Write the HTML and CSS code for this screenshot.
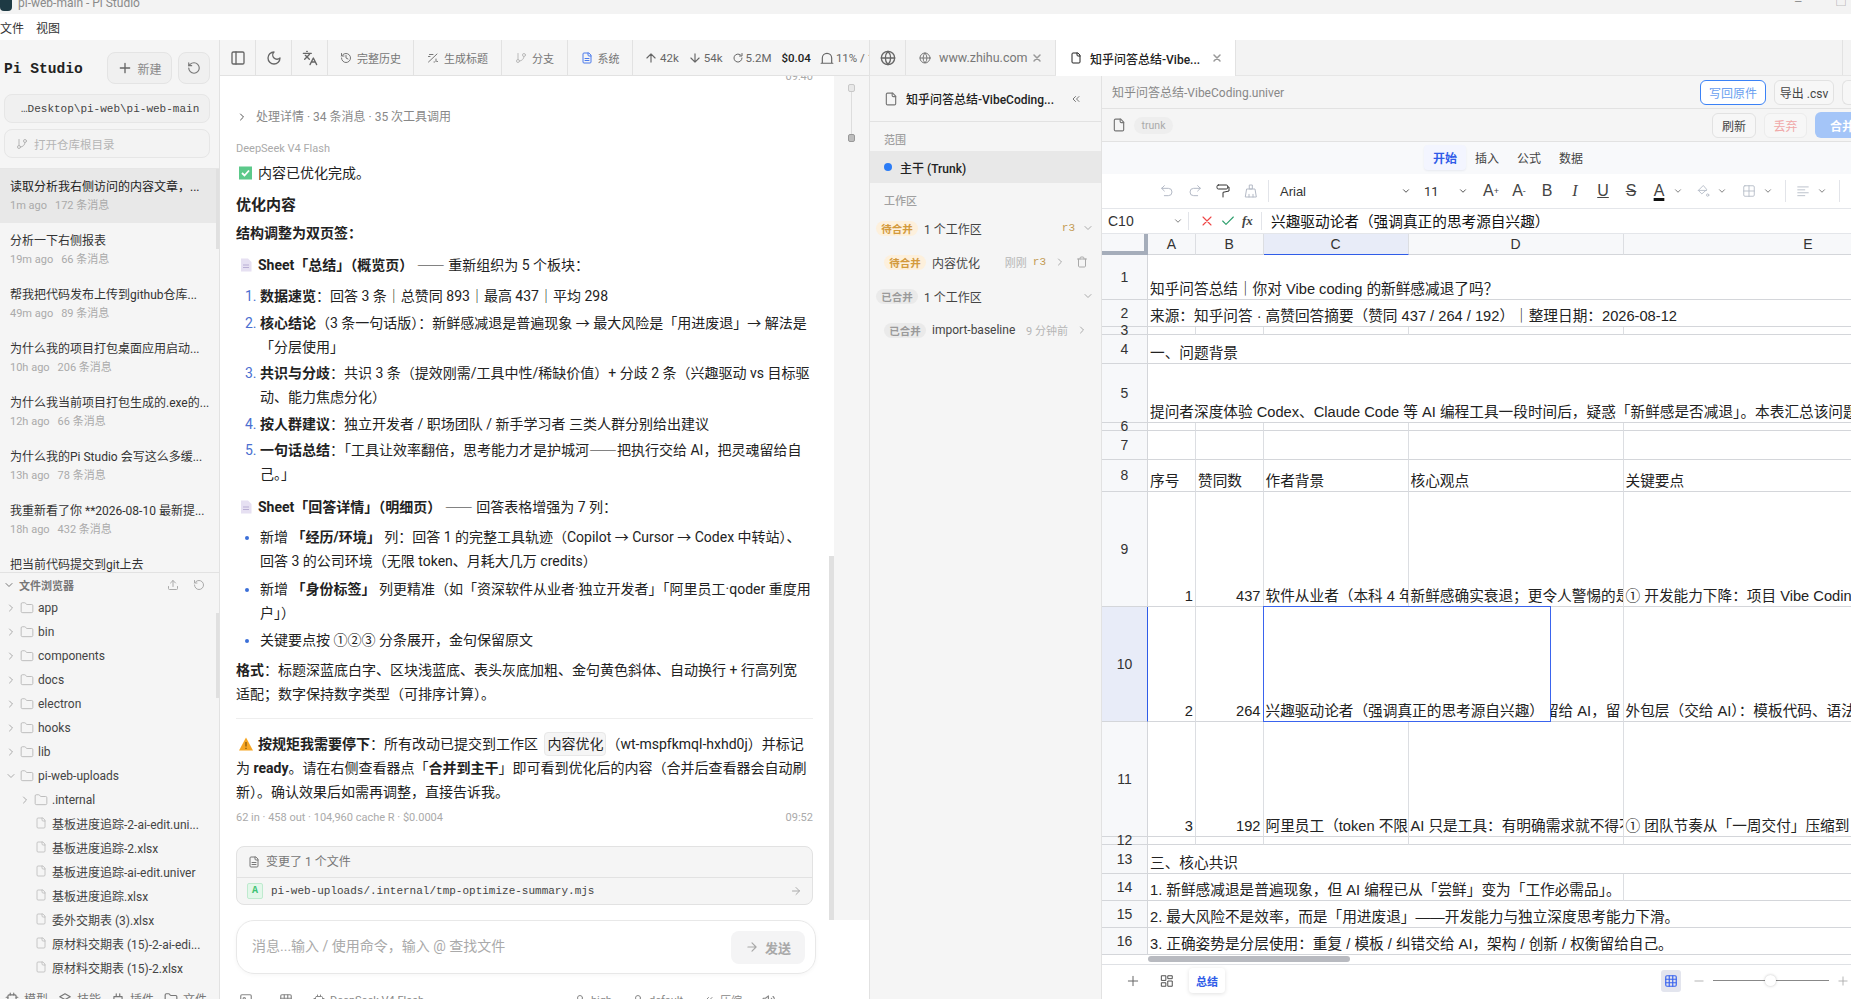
FILE: index.html
```html
<!DOCTYPE html>
<html lang="zh-CN">
<head>
    <title>pi-web-main - Pi Studio</title>
    <link rel="stylesheet" href="styles.css">
</head>
<body>
    <svg class="sprite">
        <symbol id="i-panel" viewBox="0 0 24 24"><rect x="3" y="3" width="18" height="18" rx="2"/><path d="M9 3v18"/></symbol>
        <symbol id="i-moon" viewBox="0 0 24 24"><path d="M12 3a6 6 0 0 0 9 9 9 9 0 1 1-9-9Z"/></symbol>
        <symbol id="i-lang" viewBox="0 0 24 24"><path d="m5 8 6 6M4 14l6-6 2-3M2 5h12M7 2h1M22 22l-5-10-5 10M14 18h6"/></symbol>
        <symbol id="i-history" viewBox="0 0 24 24"><path d="M3 12a9 9 0 1 0 9-9 9.75 9.75 0 0 0-6.74 2.74L3 8"/><path d="M3 3v5h5M12 7v5l4 2"/></symbol>
        <symbol id="i-rotate" viewBox="0 0 24 24"><path d="M3 12a9 9 0 1 0 9-9 9.75 9.75 0 0 0-6.74 2.74L3 8"/><path d="M3 3v5h5"/></symbol>
        <symbol id="i-wand" viewBox="0 0 24 24"><path d="M3 20 20 4M5 5h7M3 9h3M18 14v5M21 19h-1M14 20h1"/></symbol>
        <symbol id="i-branch" viewBox="0 0 24 24"><path d="M6 3v12"/><circle cx="6" cy="18" r="3"/><circle cx="18" cy="6" r="3"/><path d="M18 9a9 9 0 0 1-9 9"/></symbol>
        <symbol id="i-file-text" viewBox="0 0 24 24"><path d="M15 2H6a2 2 0 0 0-2 2v16a2 2 0 0 0 2 2h12a2 2 0 0 0 2-2V7Z"/><path d="M14 2v4a2 2 0 0 0 2 2h4M16 13H8M16 17H8"/></symbol>
        <symbol id="i-file" viewBox="0 0 24 24"><path d="M15 2H6a2 2 0 0 0-2 2v16a2 2 0 0 0 2 2h12a2 2 0 0 0 2-2V7Z"/><path d="M14 2v4a2 2 0 0 0 2 2h4"/></symbol>
        <symbol id="i-folder" viewBox="0 0 24 24"><path d="M20 20a2 2 0 0 0 2-2V8a2 2 0 0 0-2-2h-7.9a2 2 0 0 1-1.69-.9L9.6 3.9A2 2 0 0 0 7.93 3H4a2 2 0 0 0-2 2v13a2 2 0 0 0 2 2Z"/></symbol>
        <symbol id="i-right" viewBox="0 0 24 24"><path d="m9 18 6-6-6-6"/></symbol>
        <symbol id="i-down" viewBox="0 0 24 24"><path d="m6 9 6 6 6-6"/></symbol>
        <symbol id="i-arrow-up" viewBox="0 0 24 24"><path d="m5 12 7-7 7 7M12 19V5"/></symbol>
        <symbol id="i-arrow-down" viewBox="0 0 24 24"><path d="M12 5v14M19 12l-7 7-7-7"/></symbol>
        <symbol id="i-arrow-right" viewBox="0 0 24 24"><path d="M5 12h14M12 5l7 7-7 7"/></symbol>
        <symbol id="i-refresh" viewBox="0 0 24 24"><path d="M20 12a8 8 0 1 1-3-6.2"/><path d="M20 3v5h-5"/></symbol>
        <symbol id="i-ctx" viewBox="0 0 24 24"><path d="M4 21v-9a8 8 0 0 1 16 0v9ZM2 21h20"/></symbol>
        <symbol id="i-globe" viewBox="0 0 24 24"><circle cx="12" cy="12" r="10"/><path d="M12 2a14.5 14.5 0 0 0 0 20 14.5 14.5 0 0 0 0-20M2 12h20"/></symbol>
        <symbol id="i-x" viewBox="0 0 24 24"><path d="M18 6 6 18M6 6l12 12"/></symbol>
        <symbol id="i-plus" viewBox="0 0 24 24"><path d="M5 12h14M12 5v14"/></symbol>
        <symbol id="i-minus" viewBox="0 0 24 24"><path d="M5 12h14"/></symbol>
        <symbol id="i-trash" viewBox="0 0 24 24"><path d="M3 6h18M19 6v14c0 1-1 2-2 2H7c-1 0-2-1-2-2V6M8 6V4c0-1 1-2 2-2h4c1 0 2 1 2 2v2"/></symbol>
        <symbol id="i-upload" viewBox="0 0 24 24"><path d="M21 15v4a2 2 0 0 1-2 2H5a2 2 0 0 1-2-2v-4M17 8l-5-5-5 5M12 3v12"/></symbol>
        <symbol id="i-chevrons" viewBox="0 0 24 24"><path d="m11 17-5-5 5-5M18 17l-5-5 5-5"/></symbol>
        <symbol id="i-check" viewBox="0 0 24 24"><path d="M20 6 9 17l-5-5"/></symbol>
        <symbol id="i-cpu" viewBox="0 0 24 24"><rect x="5" y="5" width="14" height="14" rx="2"/><path d="M9 2v3M15 2v3M9 19v3M15 19v3M2 9h3M2 15h3M19 9h3M19 15h3"/></symbol>
        <symbol id="i-grid" viewBox="0 0 24 24"><rect x="3" y="3" width="18" height="18" rx="2"/><path d="M3 12h18M12 3v18"/></symbol>
        <symbol id="i-grid-fine" viewBox="0 0 24 24"><rect x="3" y="3" width="18" height="18" rx="2"/><path d="M3 9h18M3 15h18M9 3v18M15 3v18"/></symbol>
        <symbol id="i-undo" viewBox="0 0 24 24"><path d="M8 4 4 8l4 4M4 8h10a5.5 5.5 0 0 1 0 11H8"/></symbol>
        <symbol id="i-redo" viewBox="0 0 24 24"><path d="m16 4 4 4-4 4M20 8H10a5.5 5.5 0 0 0 0 11h6"/></symbol>
        <symbol id="i-roller" viewBox="0 0 24 24"><rect x="3" y="3" width="16" height="6" rx="2"/><path d="M19 6h2v6l-9 2v7"/></symbol>
        <symbol id="i-brush" viewBox="0 0 24 24"><path d="M10 3h4v6h-4ZM6 9h12l2 12H4Z"/><path d="M9 21v-4M15 21v-4"/></symbol>
        <symbol id="i-fill" viewBox="0 0 24 24"><path d="M12 3 4 11l6 6 8-7ZM4 11h14"/><circle cx="20" cy="19" r="2"/></symbol>
        <symbol id="i-align" viewBox="0 0 24 24"><path d="M3 5h18M3 10h12M3 15h18M3 20h12"/></symbol>
        <symbol id="i-sheets" viewBox="0 0 24 24"><path d="M3 3h7v8H3ZM3 15h7v6H3ZM14 3h7v5h-7ZM14 12h7v9h-7Z"/></symbol>
        <symbol id="i-puzzle" viewBox="0 0 24 24"><path d="M9 3v5M15 3v5M5 8h14v4a7 7 0 0 1-14 0ZM12 19v3"/></symbol>
        <symbol id="i-box" viewBox="0 0 24 24"><path d="m12 3 9 5-9 5-9-5ZM3 13l9 5 9-5"/></symbol>
        <symbol id="i-image" viewBox="0 0 24 24"><rect x="3" y="3" width="18" height="18" rx="2"/><circle cx="9" cy="10" r="2"/><path d="m21 17-4-4-10 8"/></symbol>
        <symbol id="i-brain" viewBox="0 0 24 24"><circle cx="12" cy="8" r="5"/><path d="M9 13v8h6v-8"/></symbol>
        <symbol id="i-volume" viewBox="0 0 24 24"><path d="M11 5 6 9H2v6h4l5 4ZM16 9a5 5 0 0 1 0 6M19 6a9 9 0 0 1 0 12"/></symbol>
    </svg>

    <div class="titlebar">
        <span class="app-logo"></span>
        <span class="title-text">pi-web-main - Pi Studio</span>
        <span class="win-btns"><span>—</span><span>▢</span></span>
    </div>
    <div class="menubar"><span>文件</span><span>视图</span></div>

    <div class="main">
        <aside class="sidebar">
            <div class="side-top">
                <div class="brand-row">
                    <span class="brand">Pi Studio</span>
                    <button class="new-btn"><svg class="ic ic-16"><use href="#i-plus"/></svg>新建</button>
                    <button class="square-btn"><svg class="ic ic-14"><use href="#i-rotate"/></svg></button>
                </div>
                <div class="path-box">…Desktop\pi-web\pi-web-main</div>
                <div class="repo-box"><svg class="ic ic-12"><use href="#i-branch"/></svg>打开仓库根目录</div>
            </div>

            <div class="session-list">
                <div class="session active"><div class="s-title">读取分析我右侧访问的内容文章，...</div><div class="s-sub"><span>1m ago</span><span>172 条消息</span></div></div>
                <div class="session"><div class="s-title">分析一下右侧报表</div><div class="s-sub"><span>19m ago</span><span>66 条消息</span></div></div>
                <div class="session"><div class="s-title">帮我把代码发布上传到github仓库...</div><div class="s-sub"><span>49m ago</span><span>89 条消息</span></div></div>
                <div class="session"><div class="s-title">为什么我的项目打包桌面应用启动...</div><div class="s-sub"><span>10h ago</span><span>206 条消息</span></div></div>
                <div class="session"><div class="s-title">为什么我当前项目打包生成的.exe的...</div><div class="s-sub"><span>12h ago</span><span>66 条消息</span></div></div>
                <div class="session"><div class="s-title">为什么我的Pi Studio 会写这么多缓...</div><div class="s-sub"><span>13h ago</span><span>78 条消息</span></div></div>
                <div class="session"><div class="s-title">我重新看了你 **2026-08-10 最新提...</div><div class="s-sub"><span>18h ago</span><span>432 条消息</span></div></div>
                <div class="session"><div class="s-title">把当前代码提交到git上去</div></div>
                <span class="thumb session-thumb"></span>
            </div>

            <div class="file-browser">
                <div class="fb-head">
                    <svg class="ic ic-12"><use href="#i-down"/></svg>
                    <span class="fb-title">文件浏览器</span>
                    <svg class="ic ic-12 fb-upload"><use href="#i-upload"/></svg>
                    <svg class="ic ic-12 fb-refresh"><use href="#i-rotate"/></svg>
                </div>
                <div class="f-row"><svg class="ic ic-12 chev"><use href="#i-right"/></svg><svg class="ic ic-14 fold"><use href="#i-folder"/></svg>app</div>
                <div class="f-row"><svg class="ic ic-12 chev"><use href="#i-right"/></svg><svg class="ic ic-14 fold"><use href="#i-folder"/></svg>bin</div>
                <div class="f-row"><svg class="ic ic-12 chev"><use href="#i-right"/></svg><svg class="ic ic-14 fold"><use href="#i-folder"/></svg>components</div>
                <div class="f-row"><svg class="ic ic-12 chev"><use href="#i-right"/></svg><svg class="ic ic-14 fold"><use href="#i-folder"/></svg>docs</div>
                <div class="f-row"><svg class="ic ic-12 chev"><use href="#i-right"/></svg><svg class="ic ic-14 fold"><use href="#i-folder"/></svg>electron</div>
                <div class="f-row"><svg class="ic ic-12 chev"><use href="#i-right"/></svg><svg class="ic ic-14 fold"><use href="#i-folder"/></svg>hooks</div>
                <div class="f-row"><svg class="ic ic-12 chev"><use href="#i-right"/></svg><svg class="ic ic-14 fold"><use href="#i-folder"/></svg>lib</div>
                <div class="f-row"><svg class="ic ic-12 chev"><use href="#i-down"/></svg><svg class="ic ic-14 fold"><use href="#i-folder"/></svg>pi-web-uploads</div>
                <div class="f-row nested"><svg class="ic ic-12 chev"><use href="#i-right"/></svg><svg class="ic ic-14 fold"><use href="#i-folder"/></svg>.internal</div>
                <div class="f-row leaf"><svg class="ic ic-12 doc"><use href="#i-file"/></svg>基板进度追踪-2-ai-edit.uni...</div>
                <div class="f-row leaf"><svg class="ic ic-12 doc"><use href="#i-file"/></svg>基板进度追踪-2.xlsx</div>
                <div class="f-row leaf"><svg class="ic ic-12 doc"><use href="#i-file"/></svg>基板进度追踪-ai-edit.univer</div>
                <div class="f-row leaf"><svg class="ic ic-12 doc"><use href="#i-file"/></svg>基板进度追踪.xlsx</div>
                <div class="f-row leaf"><svg class="ic ic-12 doc"><use href="#i-file"/></svg>委外交期表 (3).xlsx</div>
                <div class="f-row leaf"><svg class="ic ic-12 doc"><use href="#i-file"/></svg>原材料交期表 (15)-2-ai-edi...</div>
                <div class="f-row leaf"><svg class="ic ic-12 doc"><use href="#i-file"/></svg>原材料交期表 (15)-2.xlsx</div>
                <span class="thumb files-thumb"></span>
            </div>

            <div class="side-foot">
                <span><svg class="ic ic-14"><use href="#i-cpu"/></svg>模型</span>
                <span><svg class="ic ic-14"><use href="#i-box"/></svg>技能</span>
                <span><svg class="ic ic-14"><use href="#i-puzzle"/></svg>插件</span>
                <span><svg class="ic ic-14"><use href="#i-folder"/></svg>文件</span>
            </div>
        </aside>

        <section class="chat">
            <div class="chat-toolbar">
                <span class="tb-btn icon-only"><svg class="ic ic-16"><use href="#i-panel"/></svg></span>
                <span class="tb-btn icon-only"><svg class="ic ic-16"><use href="#i-moon"/></svg></span>
                <span class="tb-btn icon-only"><svg class="ic ic-16"><use href="#i-lang"/></svg></span>
                <span class="tb-btn w-86"><svg class="ic ic-12"><use href="#i-history"/></svg>完整历史</span>
                <span class="tb-btn w-88"><svg class="ic ic-12"><use href="#i-wand"/></svg>生成标题</span>
                <span class="tb-btn w-66 muted"><svg class="ic ic-12"><use href="#i-branch"/></svg>分支</span>
                <span class="tb-btn w-65"><svg class="ic ic-12 blue"><use href="#i-file-text"/></svg>系统</span>
                <span class="stats">
                    <span class="stat"><svg class="ic ic-14"><use href="#i-arrow-up"/></svg>42k</span>
                    <span class="stat"><svg class="ic ic-14"><use href="#i-arrow-down"/></svg>54k</span>
                    <span class="stat"><svg class="ic ic-12"><use href="#i-refresh"/></svg>5.2M</span>
                    <span class="stat cost">$0.04</span>
                    <span class="stat"><svg class="ic ic-14"><use href="#i-ctx"/></svg>11% / 1M</span>
                </span>
            </div>

            <div class="chat-body">
                <div class="messages">
                    <div class="time-top">09:40</div>
                    <div class="detail-row"><svg class="ic ic-12"><use href="#i-right"/></svg>处理详情 · 34 条消息 · 35 次工具调用</div>
                    <div class="model-name">DeepSeek V4 Flash</div>

                    <p class="line first"><svg class="emoji" viewBox="0 0 16 16"><rect x="1" y="1.5" width="13" height="13" fill="#5cc98a"/><path d="m4 8 2.5 2.5L11 5.5" fill="none" stroke="#fff" stroke-width="1.8"/></svg>内容已优化完成。</p>
                    <h3 class="msg-h">优化内容</h3>
                    <p class="line strong-line"><b>结构调整为双页签：</b></p>
                    <p class="line sheet-line"><svg class="emoji" viewBox="0 0 16 16"><path d="M3 1.5h7l3.5 3.5v9.5H3Z" fill="#e6e0f2"/><path d="M5 8h6M5 10.5h6" stroke="#b9aed4"/></svg><b>Sheet「总结」（概览页）</b> <span class="cjk">——</span> 重新组织为 5 个板块：</p>

                    <ol class="msg-ol">
                        <li><b>数据速览</b>：回答 3 条｜总赞同 893｜最高 437｜平均 298</li>
                        <li><b>核心结论</b>（3 条一句话版）：新鲜感减退是普遍现象 → 最大风险是「用进废退」→ 解法是<br>「分层使用」</li>
                        <li><b>共识与分歧</b>：共识 3 条（提效刚需/工具中性/稀缺价值）+ 分歧 2 条（兴趣驱动 vs 目标驱<br>动、能力焦虑分化）</li>
                        <li><b>按人群建议</b>：独立开发者 / 职场团队 / 新手学习者 三类人群分别给出建议</li>
                        <li><b>一句话总结</b>：「工具让效率翻倍，思考能力才是护城河<span class="cjk">——</span>把执行交给 AI，把灵魂留给自<br>己。」</li>
                    </ol>

                    <p class="line sheet-line two"><svg class="emoji" viewBox="0 0 16 16"><path d="M3 1.5h7l3.5 3.5v9.5H3Z" fill="#e6e0f2"/><path d="M5 8h6M5 10.5h6" stroke="#b9aed4"/></svg><b>Sheet「回答详情」（明细页）</b> <span class="cjk">——</span> 回答表格增强为 7 列：</p>

                    <ul class="msg-ul">
                        <li>新增 <b>「经历/环境」</b> 列：回答 1 的完整工具轨迹（Copilot → Cursor → Codex 中转站）、<br>回答 3 的公司环境（无限 token、月耗大几万 credits）</li>
                        <li>新增 <b>「身份标签」</b> 列更精准（如「资深软件从业者·独立开发者」「阿里员工·qoder 重度用<br>户」）</li>
                        <li>关键要点按 ①②③ 分条展开，金句保留原文</li>
                    </ul>

                    <p class="line format-line"><b>格式</b>：标题深蓝底白字、区块浅蓝底、表头灰底加粗、金句黄色斜体、自动换行 + 行高列宽<br>适配；数字保持数字类型（可排序计算）。</p>
                    <hr class="msg-hr">
                    <p class="line"><svg class="emoji" viewBox="0 0 16 16"><path d="M8 1.5 15 14.5H1Z" fill="#f6a623"/><path d="M8 6v4.5M8 11.8v1.2" stroke="#7a4a00" stroke-width="1.1"/></svg><b>按规矩我需要停下</b>：所有改动已提交到工作区 <code class="chip">内容优化</code>（wt-mspfkmql-hxhd0j）并标记<br>为 <b>ready</b>。请在右侧查看器点「<b>合并到主干</b>」即可看到优化后的内容（合并后查看器会自动刷<br>新）。确认效果后如需再调整，直接告诉我。</p>

                    <div class="msg-meta"><span>62 in · 458 out · 104,960 cache R · $0.0004</span><span>09:52</span></div>

                    <div class="changes">
                        <div class="changes-head"><svg class="ic ic-12"><use href="#i-file-text"/></svg>变更了 1 个文件</div>
                        <div class="changes-row"><span class="badge-a">A</span><span class="change-path">pi-web-uploads/.internal/tmp-optimize-summary.mjs</span><svg class="ic ic-12"><use href="#i-arrow-right"/></svg></div>
                    </div>
                </div>
                <div class="msg-scroll"><span class="thumb chat-thumb"></span></div>
                <div class="rail">
                    <span class="rail-mark"></span>
                    <span class="rail-line"></span>
                    <span class="rail-mark dark"></span>
                </div>
            </div>

            <div class="composer-wrap">
                <div class="composer">
                    <span class="placeholder">消息...输入 / 使用命令，输入 @ 查找文件</span>
                    <button class="send-btn"><svg class="ic ic-14"><use href="#i-arrow-right"/></svg>发送</button>
                </div>
                <div class="composer-foot">
                    <svg class="ic ic-14"><use href="#i-image"/></svg>
                    <svg class="ic ic-14 foot-grid"><use href="#i-grid-fine"/></svg>
                    <span class="foot-model"><svg class="ic ic-12"><use href="#i-cpu"/></svg>DeepSeek V4 Flash</span>
                    <span class="foot-high"><svg class="ic ic-12"><use href="#i-brain"/></svg>high</span>
                    <span class="foot-item"><svg class="ic ic-12"><use href="#i-brain"/></svg>default</span>
                    <span class="foot-item"><svg class="ic ic-12"><use href="#i-chevrons"/></svg>压缩</span>
                    <svg class="ic ic-14 foot-item"><use href="#i-volume"/></svg>
                </div>
            </div>
        </section>

        <section class="right">
            <div class="tab-strip">
                <span class="tab-globe"><svg class="ic ic-16"><use href="#i-globe"/></svg></span>
                <span class="tab tab-site"><svg class="ic ic-12"><use href="#i-globe"/></svg><span class="tab-name">www.zhihu.com</span><svg class="ic ic-12 tab-x"><use href="#i-x"/></svg></span>
                <span class="tab tab-active"><svg class="ic ic-12"><use href="#i-file"/></svg><span class="tab-name">知乎问答总结-Vibe...</span><svg class="ic ic-12 tab-x"><use href="#i-x"/></svg></span>
                <span class="tab-end"></span>
            </div>

            <div class="right-body">
                <div class="wt-panel">
                    <div class="wt-head">
                        <svg class="ic ic-14"><use href="#i-file"/></svg>
                        <span class="wt-title">知乎问答总结-VibeCoding...</span>
                        <svg class="ic ic-12"><use href="#i-chevrons"/></svg>
                    </div>
                    <div class="wt-label first">范围</div>
                    <div class="trunk-row"><span class="dot"></span>主干 (Trunk)</div>
                    <div class="wt-label">工作区</div>

                    <div class="wt-row">
                        <span class="pill pending">待合并</span><span>1 个工作区</span>
                        <span class="rev push">r3</span><svg class="ic ic-12 rev-chev"><use href="#i-down"/></svg>
                    </div>
                    <div class="wt-row sub">
                        <span class="pill pending">待合并</span><span>内容优化</span>
                        <span class="when push">刚刚</span><span class="rev">r3</span>
                        <svg class="ic ic-12 sub-chev"><use href="#i-right"/></svg>
                        <svg class="ic ic-12 sub-trash"><use href="#i-trash"/></svg>
                    </div>
                    <div class="wt-row">
                        <span class="pill merged">已合并</span><span>1 个工作区</span>
                        <svg class="ic ic-12 rev-chev push"><use href="#i-down"/></svg>
                    </div>
                    <div class="wt-row sub">
                        <span class="pill merged">已合并</span><span>import-baseline</span>
                        <span class="when push">9 分钟前</span>
                        <svg class="ic ic-12 last-chev"><use href="#i-right"/></svg>
                    </div>
                </div>

                <div class="viewer">
                    <div class="v-row v-row-1">
                        <span class="v-name">知乎问答总结-VibeCoding.univer</span>
                        <button class="v-btn write">写回原件</button>
                        <button class="v-btn export">导出 .csv</button>
                        <span class="v-btn stub"></span>
                    </div>
                    <div class="v-row v-row-2">
                        <svg class="ic ic-14"><use href="#i-file"/></svg>
                        <span class="trunk-pill">trunk</span>
                        <button class="v-btn refresh">刷新</button>
                        <button class="v-btn discard">丢弃</button>
                        <button class="v-btn merge">合并</button>
                    </div>

                    <div class="ribbon">
                        <span class="rb-tab on">开始</span><span class="rb-tab">插入</span><span class="rb-tab">公式</span><span class="rb-tab">数据</span>
                    </div>

                    <div class="sheet-tools">
                        <span class="tool lite"><svg class="ic ic-16"><use href="#i-undo"/></svg></span>
                        <span class="tool lite"><svg class="ic ic-16"><use href="#i-redo"/></svg></span>
                        <span class="tool"><svg class="ic ic-16"><use href="#i-roller"/></svg></span>
                        <span class="tool lite"><svg class="ic ic-16"><use href="#i-brush"/></svg></span>
                        <span class="tool-sep"></span>
                        <span class="font-pick">Arial<svg class="ic ic-10"><use href="#i-down"/></svg></span>
                        <span class="size-pick">11<svg class="ic ic-10"><use href="#i-down"/></svg></span>
                        <span class="tool t-txt">A<sup>+</sup></span>
                        <span class="tool t-txt">A<sup>-</sup></span>
                        <span class="tool t-txt">B</span>
                        <span class="tool t-txt t-i">I</span>
                        <span class="tool t-txt t-u">U</span>
                        <span class="tool t-txt t-s">S</span>
                        <span class="tool t-txt t-color">A</span>
                        <span class="tool-chev first"><svg class="ic ic-10"><use href="#i-down"/></svg></span>
                        <span class="tool lite narrow"><svg class="ic ic-14"><use href="#i-fill"/></svg></span>
                        <span class="tool-chev lite"><svg class="ic ic-10"><use href="#i-down"/></svg></span>
                        <span class="tool lite narrow"><svg class="ic ic-14"><use href="#i-grid"/></svg></span>
                        <span class="tool-chev lite"><svg class="ic ic-10"><use href="#i-down"/></svg></span>
                        <span class="tool-sep mid"></span>
                        <span class="tool lite narrow"><svg class="ic ic-14"><use href="#i-align"/></svg></span>
                        <span class="tool-chev lite"><svg class="ic ic-10"><use href="#i-down"/></svg></span>
                        <span class="tool-sep mid"></span>
                    </div>

                    <div class="formula-bar">
                        <span class="cell-ref">C10</span>
                        <svg class="ic ic-10 ref-chev"><use href="#i-down"/></svg>
                        <span class="fx-sep"></span>
                        <svg class="ic ic-16 fx-x"><use href="#i-x"/></svg>
                        <svg class="ic ic-16 fx-ok"><use href="#i-check"/></svg>
                        <span class="fx">fx</span>
                        <span class="fx-sep"></span>
                        <span class="formula">兴趣驱动论者（强调真正的思考源自兴趣）</span>
                    </div>

                    <div class="grid">
                        <div class="corner"></div>
                        <div class="ch">A</div><div class="ch">B</div><div class="ch sel">C</div><div class="ch">D</div><div class="ch">E</div>

                        <div class="rh">1</div><div class="c span-all">知乎问答总结｜你对 Vibe coding 的新鲜感减退了吗？</div>
                        <div class="rh">2</div><div class="c span-all">来源：知乎问答 · 高赞回答摘要（赞同 437 / 264 / 192）｜整理日期：2026-08-12</div>
                        <div class="rh short">3</div><div class="c"></div><div class="c"></div><div class="c"></div><div class="c"></div><div class="c"></div>
                        <div class="rh">4</div><div class="c span-all">一、问题背景</div>
                        <div class="rh">5</div><div class="c span-all">提问者深度体验 Codex、Claude Code 等 AI 编程工具一段时间后，疑惑「新鲜感是否减退」。本表汇总该问题下三条高赞回答。</div>
                        <div class="rh short">6</div><div class="c"></div><div class="c"></div><div class="c"></div><div class="c"></div><div class="c"></div>
                        <div class="rh">7</div><div class="c"></div><div class="c"></div><div class="c"></div><div class="c"></div><div class="c"></div>
                        <div class="rh">8</div><div class="c">序号</div><div class="c">赞同数</div><div class="c">作者背景</div><div class="c">核心观点</div><div class="c">关键要点</div>

                        <div class="rh">9</div><div class="c num">1</div><div class="c num">437</div><div class="c">软件从业者（本科 4 年开发）</div><div class="c">新鲜感确实衰退；更令人警惕的是开发能力</div><div class="c">① 开发能力下降：项目 Vibe Coding 后难以独立维护</div>
                        <div class="rh sel">10</div><div class="c num">2</div><div class="c num">264</div><div class="c selected">兴趣驱动论者（强调真正的思考源自兴趣）</div><div class="c to-end">复杂决策留给 AI，留</div><div class="c">外包层（交给 AI）：模板代码、语法查询、报错排查</div>
                        <div class="rh">11</div><div class="c num">3</div><div class="c num">192</div><div class="c">阿里员工（token 不限量）</div><div class="c">AI 只是工具：有明确需求就不得不用下去</div><div class="c">① 团队节奏从「一周交付」压缩到「三天交付」</div>

                        <div class="rh short">12</div><div class="c"></div><div class="c"></div><div class="c"></div><div class="c"></div><div class="c"></div>
                        <div class="rh">13</div><div class="c span-all">三、核心共识</div>
                        <div class="rh">14</div><div class="c span-4">1. 新鲜感减退是普遍现象，但 AI 编程已从「尝鲜」变为「工作必需品」。</div><div class="c"></div>
                        <div class="rh">15</div><div class="c span-all">2. 最大风险不是效率，而是「用进废退」——开发能力与独立深度思考能力下滑。</div>
                        <div class="rh">16</div><div class="c span-all">3. 正确姿势是分层使用：重复 / 模板 / 纠错交给 AI，架构 / 创新 / 权衡留给自己。</div>
                    </div>

                    <div class="h-scroll"><span class="h-thumb"></span></div>

                    <div class="sheet-foot">
                        <svg class="ic ic-16 sf-plus"><use href="#i-plus"/></svg>
                        <svg class="ic ic-14 sf-list"><use href="#i-sheets"/></svg>
                        <span class="sheet-tab">总结</span>
                        <span class="sf-grid"><svg class="ic ic-14"><use href="#i-grid-fine"/></svg></span>
                        <svg class="ic ic-14 sf-zoom"><use href="#i-minus"/></svg>
                        <span class="sf-slider"><span class="sf-knob"></span></span>
                        <svg class="ic ic-14 sf-zoom"><use href="#i-plus"/></svg>
                    </div>
                </div>
            </div>
        </section>
    </div>
</body>
</html>
```

FILE: styles.css
```css
* {
    box-sizing: border-box;
}

html, body {
    height: 100%;
}

body {
    margin: 0;
    height: 999px;
    overflow: hidden;
    display: flex;
    flex-direction: column;
    background: #fff;
    color: #1f1f1f;
    font-family: Roboto, "Noto Sans CJK SC", sans-serif;
    font-size: 12px;
}

button {
    font-family: inherit;
}

.sprite {
    display: none;
}

.ic {
    fill: none;
    stroke: currentColor;
    stroke-width: 2;
    stroke-linecap: round;
    stroke-linejoin: round;
    flex-shrink: 0;
}

.ic-10 { width: 10px; height: 10px; }
.ic-12 { width: 12px; height: 12px; }
.ic-14 { width: 14px; height: 14px; }
.ic-16 { width: 16px; height: 16px; }

.cjk {
    font-family: "Noto Sans CJK SC", sans-serif;
    line-height: 1;
}

/* window chrome */
.titlebar {
    height: 14px;
    flex-shrink: 0;
    display: flex;
    align-items: flex-end;
    background: #f3f3f3;
    overflow: hidden;
}

.app-logo {
    width: 12px;
    height: 18px;
    margin-bottom: 3px;
    border-radius: 0 0 4px 4px;
    background: #1e3a44;
}

.title-text {
    margin-left: 6px;
    color: #8a8a8a;
    font-size: 12px;
    line-height: 16px;
    margin-bottom: 3px;
}

.win-btns {
    margin-left: auto;
    display: flex;
    gap: 34px;
    padding-right: 5px;
    color: #888;
    font-size: 10px;
    line-height: 12px;
    margin-bottom: 6px;
}

.menubar {
    height: 26px;
    flex-shrink: 0;
    display: flex;
    gap: 12px;
    align-items: center;
    background: #fff;
    font-size: 12px;
    color: #333;
}

.main {
    flex: 1;
    min-height: 0;
    display: flex;
}

/* left sidebar */
.sidebar {
    width: 220px;
    flex-shrink: 0;
    display: flex;
    flex-direction: column;
    background: #f5f5f5;
    border-right: 1px solid #e2e2e2;
    overflow: hidden;
}

.side-top {
    padding: 12px 9px 0 4px;
    height: 128px;
    flex-shrink: 0;
}

.brand-row {
    display: flex;
    align-items: center;
    height: 32px;
}

.brand {
    font-family: "Liberation Mono", monospace;
    font-size: 14.6px;
    font-weight: 700;
    color: #222;
    width: 103px;
    padding-top: 2px;
}

.new-btn, .square-btn {
    height: 32px;
    border: 1px solid #e4e4e4;
    border-radius: 8px;
    background: #f0f0f0;
    color: #8a8a8a;
    display: flex;
    align-items: center;
    justify-content: center;
    padding: 0;
    font-size: 12px;
}

.new-btn {
    width: 65px;
    gap: 4px;
}

.new-btn .ic {
    color: #666;
}

.square-btn {
    width: 32px;
    margin-left: 6px;
    color: #777;
}

.path-box, .repo-box {
    height: 29px;
    border: 1px solid #e6e6e6;
    border-radius: 8px;
    background: #f0f0f0;
    display: flex;
    align-items: center;
    margin-top: 10px;
}

.path-box {
    padding-left: 16px;
    font-family: "Liberation Mono", monospace;
    font-size: 11px;
    color: #444;
    white-space: nowrap;
}

.repo-box {
    margin-top: 6px;
    padding-left: 11px;
    gap: 6px;
    background: #f3f3f3;
    color: #b5b5b5;
    font-size: 11.5px;
}

.session-list {
    position: relative;
    height: 404px;
    flex-shrink: 0;
    border-top: 1px solid #e6e6e6;
    overflow: hidden;
}

.session {
    height: 54px;
    padding: 9px 10px 0;
    overflow: hidden;
}

.session.active {
    background: #e8e8e8;
}

.s-title {
    line-height: 18px;
    color: #333;
    white-space: nowrap;
    overflow: hidden;
}

.active .s-title {
    color: #222;
}

.s-sub {
    display: flex;
    gap: 8px;
    margin-top: 1px;
    line-height: 18px;
    font-size: 11px;
    color: #aaa;
}

.thumb {
    position: absolute;
    background: #e0e0e0;
}

.session-thumb {
    right: 0;
    top: 0;
    width: 3px;
    height: 80px;
}

.file-browser {
    position: relative;
    flex-shrink: 0;
    height: 418px;
    border-top: 1px solid #e2e2e2;
}

.fb-head {
    height: 23px;
    display: flex;
    align-items: center;
    padding-left: 3px;
    color: #777;
}

.fb-title {
    margin-left: 4px;
    font-size: 11px;
    font-weight: 700;
    color: #777;
}

.fb-upload {
    margin-left: 93px;
    color: #aaa;
}

.fb-refresh {
    margin-left: 14px;
    color: #aaa;
}

.f-row {
    height: 24px;
    display: flex;
    align-items: center;
    padding-left: 5px;
    color: #444;
    white-space: nowrap;
    font-size: 12px;
}

.chev {
    color: #aaa;
}

.fold {
    margin-left: 3px;
    margin-right: 4px;
    color: #b5b5b5;
    stroke-width: 1.5;
}

.f-row.nested {
    padding-left: 19px;
}

.f-row.leaf {
    padding-left: 35px;
    padding-bottom: 2px;
}

.doc {
    margin-right: 5px;
    color: #b5b5b5;
    stroke-width: 1.5;
}

.files-thumb {
    right: 0;
    top: 40px;
    width: 3px;
    height: 85px;
}

.side-foot {
    display: flex;
    padding: 0 0 0 5px;
    gap: 10px;
    color: #777;
    white-space: nowrap;
}

.side-foot span {
    display: flex;
    align-items: center;
    gap: 5px;
}

/* chat column */
.chat {
    width: 650px;
    flex-shrink: 0;
    display: flex;
    flex-direction: column;
    border-right: 1px solid #e2e2e2;
    overflow: hidden;
}

.chat-toolbar {
    height: 36px;
    flex-shrink: 0;
    display: flex;
    align-items: stretch;
    background: #f5f5f5;
    border-bottom: 1px solid #e2e2e2;
    white-space: nowrap;
    overflow: hidden;
    color: #777;
    font-size: 11px;
}

.tb-btn {
    display: flex;
    align-items: center;
    justify-content: center;
    gap: 5px;
    border-right: 1px solid #e2e2e2;
    flex-shrink: 0;
}

.icon-only {
    width: 36px;
    color: #666;
}

.w-86 { width: 86px; }
.w-88 { width: 88px; }
.w-66 { width: 66px; }
.w-65 { width: 65px; }

.muted .ic {
    color: #bbb;
}

.blue {
    color: #4b7bec;
}

.stats {
    display: flex;
    align-items: center;
    padding-left: 11px;
    gap: 9px;
    font-size: 11.5px;
    color: #666;
}

.stat {
    display: flex;
    align-items: center;
    gap: 2px;
}

.stat.cost {
    margin-left: 1px;
    margin-right: 0;
    color: #222;
    font-weight: 500;
}

.chat-body {
    flex: 1;
    min-height: 0;
    display: flex;
}

.messages {
    width: 609px;
    flex-shrink: 0;
    padding: 0 16px;
    overflow: hidden;
    white-space: nowrap;
    font-size: 14px;
    line-height: 24px;
    color: #222;
}

.time-top {
    height: 10px;
    margin-top: -4px;
    text-align: right;
    font-size: 11px;
    line-height: 10px;
    color: #aaa;
}

.detail-row {
    display: flex;
    align-items: center;
    gap: 8px;
    margin-top: 26px;
    font-size: 12px;
    line-height: 18px;
    color: #888;
}

.detail-row .ic {
    margin-left: 0;
    color: #555;
}

.model-name {
    margin-top: 15px;
    font-size: 11px;
    line-height: 16px;
    color: #aaa;
}

.line {
    margin: 0;
}

.line.first {
    margin-top: 4px;
}

.emoji {
    width: 16px;
    height: 16px;
    margin: 0 4px 0 2px;
    vertical-align: -3px;
}

.msg-h {
    margin: 8px 0 0;
    font-size: 15px;
    line-height: 24px;
    font-weight: 700;
}

.strong-line {
    margin-top: 4px;
}

.sheet-line {
    margin-top: 8px;
}

.sheet-line.two {
    margin-top: 9px;
}

.msg-ol, .msg-ul {
    margin: 7px 0 0;
    padding-left: 24px;
}

.msg-ol li::marker {
    color: #4a6fd0;
}

.msg-ul li::marker {
    color: #3b6fd8;
}

.msg-ol li + li {
    margin-top: 2.5px;
}

.msg-ul li + li {
    margin-top: 3.5px;
}

.msg-ul {
    margin-top: 6px;
}

.format-line {
    margin-top: 6px;
}

.msg-hr {
    margin: 12px 0 13px;
    border: 0;
    border-top: 1px solid #eee;
}

.chip {
    display: inline-block;
    padding: 0 2px;
    margin-left: 3px;
    border: 1px solid #e8e8e8;
    border-radius: 4px;
    background: #f5f5f5;
    font-family: inherit;
    font-size: 14px;
    line-height: 22px;
}

.msg-meta {
    display: flex;
    justify-content: space-between;
    margin-top: 6px;
    font-size: 11px;
    line-height: 16px;
    color: #aaa;
}

.changes {
    margin-top: 20px;
    border: 1px solid #e2e2e2;
    border-radius: 8px;
    background: #f5f5f5;
    overflow: hidden;
}

.changes-head {
    height: 31px;
    display: flex;
    align-items: center;
    gap: 6px;
    padding-left: 11px;
    border-bottom: 1px solid #e2e2e2;
    font-size: 12px;
    color: #777;
}

.changes-row {
    height: 26px;
    display: flex;
    align-items: center;
    padding: 0 10px;
    color: #aaa;
}

.badge-a {
    width: 16px;
    height: 16px;
    display: flex;
    align-items: center;
    justify-content: center;
    border: 1px solid #bfeacf;
    border-radius: 2px;
    background: #e3f7ea;
    color: #3cc273;
    font-family: "Liberation Mono", monospace;
    font-size: 10px;
    font-weight: 700;
}

.change-path {
    flex: 1;
    margin-left: 8px;
    font-family: "Liberation Mono", monospace;
    font-size: 11px;
    color: #444;
}

.msg-scroll {
    position: relative;
    width: 5px;
    flex-shrink: 0;
}

.chat-thumb {
    left: 0;
    top: 480px;
    bottom: 0;
    width: 5px;
}

.rail {
    flex: 1;
    display: flex;
    flex-direction: column;
    align-items: center;
    padding-top: 8px;
    background: #f5f5f5;
}

.rail-mark {
    width: 7px;
    height: 8px;
    border: 1px solid #c8c8c8;
    border-radius: 2px;
    background: #e8e8e8;
}

.rail-mark.dark {
    border-color: #999;
    background: #bdbdbd;
}

.rail-line {
    width: 1px;
    height: 42px;
    background: #ddd;
}

.composer-wrap {
    height: 79px;
    flex-shrink: 0;
    padding-left: 16px;
    overflow: hidden;
    background: #fff;
}

.composer {
    width: 580px;
    height: 54px;
    display: flex;
    align-items: center;
    padding: 0 10px 0 15px;
    border: 1px solid #e8e8e8;
    border-radius: 18px;
    box-shadow: 0 1px 4px rgba(0, 0, 0, 0.04);
}

.placeholder {
    flex: 1;
    padding-bottom: 5px;
    font-size: 14px;
    color: #aaa;
}

.send-btn {
    width: 74px;
    height: 33px;
    display: flex;
    align-items: center;
    justify-content: center;
    gap: 6px;
    border: 0;
    border-radius: 8px;
    background: #f4f4f5;
    color: #a8a8a8;
    font-size: 13px;
    font-weight: 700;
}

.composer-foot {
    display: flex;
    align-items: center;
    height: 16px;
    margin-top: 18px;
    padding-left: 3px;
    color: #888;
    font-size: 11px;
    white-space: nowrap;
}

.foot-grid {
    margin-left: 26px;
}

.foot-model {
    display: flex;
    align-items: center;
    gap: 5px;
    margin-left: 20px;
}

.foot-high {
    display: flex;
    align-items: center;
    gap: 5px;
    margin-left: 150px;
}

.foot-item {
    display: flex;
    align-items: center;
    gap: 5px;
    margin-left: 20px;
}

/* right side */
.right {
    flex: 1;
    min-width: 0;
    display: flex;
    flex-direction: column;
    overflow: hidden;
}

.tab-strip {
    height: 36px;
    flex-shrink: 0;
    display: flex;
    background: #f3f3f3;
    border-bottom: 1px solid #e6e6e6;
    color: #777;
}

.tab-globe {
    width: 36px;
    display: flex;
    align-items: center;
    justify-content: center;
    border-right: 1px solid #e2e2e2;
    color: #666;
}

.tab {
    display: flex;
    align-items: center;
    padding-left: 13px;
    border-right: 1px solid #e2e2e2;
    font-size: 12px;
}

.tab-site {
    width: 150px;
}

.tab-site .tab-name {
    font-size: 12.5px;
}

.tab-active {
    width: 180px;
    height: 36px;
    background: #fff;
    color: #222;
    font-weight: 500;
    padding-left: 14px;
}

.tab-name {
    flex: 1;
    margin-left: 8px;
    white-space: nowrap;
}

.tab-x {
    margin-right: 12px;
    color: #999;
    stroke-width: 3;
}

.tab-end {
    margin-left: auto;
    width: 9px;
    border-left: 1px solid #e2e2e2;
}

.right-body {
    flex: 1;
    min-height: 0;
    display: flex;
}

.wt-panel {
    width: 232px;
    flex-shrink: 0;
    background: #f5f5f5;
    border-right: 1px solid #e2e2e2;
    white-space: nowrap;
}

.wt-head {
    height: 46px;
    display: flex;
    align-items: center;
    padding: 0 19px 0 14px;
    border-bottom: 1px solid #e2e2e2;
    color: #777;
}

.wt-title {
    flex: 1;
    margin-left: 8px;
    color: #222;
    font-weight: 500;
}

.wt-label {
    padding-left: 14px;
    margin-top: 11px;
    line-height: 16px;
    font-size: 11px;
    font-weight: 500;
    color: #a0a0a0;
}

.wt-label.first {
    margin-top: 11px;
}

.trunk-row {
    height: 32px;
    display: flex;
    align-items: center;
    margin-top: 2px;
    padding-left: 14px;
    background: #e8e8e8;
    color: #222;
    font-weight: 500;
}

.dot {
    width: 8px;
    height: 8px;
    margin-right: 8px;
    border-radius: 50%;
    background: #2b7cf6;
}

.wt-row {
    height: 34px;
    display: flex;
    align-items: center;
    padding: 0 7px 0 6px;
    color: #444;
    gap: 6px;
}

.wt-label + .wt-row {
    margin-top: 1px;
}

.wt-row.sub {
    padding-left: 14px;
}

.pill {
    width: 42px;
    height: 15px;
    flex-shrink: 0;
    display: flex;
    align-items: center;
    justify-content: center;
    border-radius: 8px;
    font-size: 10.5px;
    font-weight: 700;
}

.pill.pending {
    background: #fdf0dc;
    color: #d39a3c;
}

.pill.merged {
    background: #eaeaea;
    color: #9a9a9a;
}

.push {
    margin-left: auto;
}

.rev {
    font-family: "Liberation Mono", monospace;
    font-size: 11px;
    color: #c39a52;
}

.rev-chev {
    margin-left: 1px;
    color: #aaa;
}

.rev-chev.push {
    margin-left: auto;
}

.when {
    font-size: 11px;
    color: #b5b5b5;
}

.sub-chev {
    margin-left: 2px;
    color: #aaa;
}

.sub-trash {
    margin-left: 4px;
    margin-right: 6px;
    color: #aaa;
}

.last-chev {
    margin-left: 2px;
    margin-right: 6px;
    color: #aaa;
}

/* spreadsheet viewer */
.viewer {
    flex: 1;
    min-width: 0;
    display: flex;
    flex-direction: column;
    overflow: hidden;
}

.v-row {
    flex-shrink: 0;
    display: flex;
    align-items: center;
    background: #f5f5f5;
    border-bottom: 1px solid #e2e2e2;
}

.v-row-1 {
    height: 33px;
    gap: 8px;
}

.v-row-2 {
    height: 33px;
    gap: 8px;
    padding-left: 10px;
    color: #777;
}

.v-name {
    flex: 1;
    padding: 0 0 2px 10px;
    color: #888;
}

.v-btn {
    height: 25px;
    padding: 0;
    border: 1px solid #e2e2e2;
    border-radius: 6px;
    background: #f7f7f7;
    color: #444;
    font-size: 12px;
}

.v-btn.write {
    width: 66px;
    border-color: #3b82f6;
    background: #fff;
    color: #6a9ff0;
}

.v-btn.export {
    width: 60px;
}

.v-btn.stub {
    width: 9px;
    border-right: 0;
    border-radius: 6px 0 0 6px;
}

.trunk-pill {
    flex: none;
    width: 39px;
    height: 17px;
    margin-right: auto;
    display: flex;
    align-items: center;
    justify-content: center;
    border-radius: 9px;
    background: #eee;
    font-size: 10.5px;
    color: #aaa;
}

.v-btn.refresh {
    width: 44px;
}

.v-btn.discard {
    width: 43px;
    border-color: #ececec;
    color: #f0a8a8;
}

.v-btn.merge {
    width: 36px;
    height: 26px;
    padding-left: 15px;
    border: 0;
    border-radius: 6px 0 0 6px;
    background: #a4c5f8;
    color: #fff;
    font-weight: 700;
    text-align: left;
    overflow: hidden;
    white-space: nowrap;
}

.ribbon {
    height: 32px;
    flex-shrink: 0;
    display: flex;
    align-items: flex-start;
    padding: 3px 0 0 322px;
    background: #f8f9fb;
}

.rb-tab {
    height: 25px;
    padding: 2px 9px 0;
    line-height: 25px;
    color: #444;
}

.rb-tab.on {
    border-radius: 4px;
    background: #f3f5ff;
    box-shadow: 0 1px 2px rgba(40, 60, 120, 0.08);
    color: #2f5ce8;
    font-weight: 700;
}

.sheet-tools {
    height: 34px;
    flex-shrink: 0;
    display: flex;
    align-items: center;
    padding-left: 51px;
    background: #fff;
    color: #333;
}

.tool {
    width: 28px;
    height: 22px;
    flex-shrink: 0;
    display: flex;
    align-items: center;
    justify-content: center;
}

.tool .ic {
    stroke-width: 1.5;
}

.tool.narrow {
    width: 20px;
    margin-left: 8px;
}

.lite {
    color: #b4bac6;
}

.tool-sep {
    width: 1px;
    height: 22px;
    flex-shrink: 0;
    margin: 0 3px;
    background: #e2e4e9;
}

.tool-sep.mid {
    margin: 0 -1px 0 8px;
}

.tool-chev {
    width: 18px;
    flex-shrink: 0;
    display: flex;
    justify-content: center;
    color: #666;
}

.tool-chev.first {
    width: 14px;
}

.font-pick {
    width: 131px;
    margin-left: 8px;
    display: flex;
    align-items: center;
    justify-content: space-between;
    font-family: "Liberation Sans", sans-serif;
    font-size: 13px;
    color: #333;
}

.size-pick {
    width: 53px;
    margin-left: 13px;
    display: flex;
    align-items: center;
    justify-content: space-between;
    font-size: 13px;
    color: #333;
    padding-right: 9px;
}

.t-txt {
    font-family: "Liberation Sans", sans-serif;
    font-size: 16px;
    color: #444;
}

.t-txt sup {
    font-size: 9px;
    line-height: 0;
}

.t-i {
    font-style: italic;
    font-family: "Liberation Serif", serif;
}

.t-u {
    text-decoration: underline;
}

.t-s {
    text-decoration: line-through;
}

.t-color {
    width: 24px;
    margin-left: 2px;
    font-weight: 400;
    text-decoration: underline 3px #111;
    text-underline-offset: 2px;
}

.formula-bar {
    height: 26px;
    flex-shrink: 0;
    display: flex;
    align-items: center;
    padding-left: 6px;
    border-top: 1px solid #e4e6ea;
    border-bottom: 1px solid #e4e6ea;
    font-family: "Liberation Sans", "Noto Sans CJK SC", sans-serif;
    white-space: nowrap;
}

.cell-ref {
    width: 65px;
    font-size: 14px;
    color: #333;
}

.ref-chev {
    color: #666;
}

.fx-sep {
    width: 1px;
    height: 18px;
    margin: 0 6px 0 5px;
    background: #e2e4e9;
}

.fx-x {
    margin-left: 4px;
    color: #e44;
    stroke-width: 1.6;
}

.fx-ok {
    margin-left: 5px;
    color: #2a9d6a;
    stroke-width: 1.6;
}

.fx {
    width: 14px;
    margin-left: 6px;
    font-family: "Liberation Serif", serif;
    font-style: italic;
    font-weight: 700;
    font-size: 13px;
    color: #444;
}

.formula {
    margin-left: 3px;
    padding-bottom: 1px;
    font-size: 14.67px;
    color: #111;
}

.grid {
    flex-shrink: 0;
    display: grid;
    grid-template-columns: 46px 48px 67.5px 145px 215px 370px;
    grid-template-rows: 21px 45px 27px 8px 29px 59px 8px 29px 32px 115px 115px 115px 8px 29px 27px 27px 27px;
    font-family: "Liberation Sans", "Noto Sans CJK SC", sans-serif;
    font-size: 14.67px;
    line-height: 19px;
    color: #222;
    white-space: nowrap;
}

.corner {
    background: #f7f8fa;
    border-right: 4px solid #a5adba;
    border-bottom: 4px solid #a5adba;
}

.ch {
    display: flex;
    align-items: center;
    justify-content: center;
    background: #f7f8fa;
    border-right: 1px solid #dcdee2;
    border-bottom: 1px solid #d4d6da;
    font-size: 14px;
    color: #333;
}

.ch.sel {
    background: #e8ecf8;
    border-bottom: 1px solid #2f5ce8;
}

.rh {
    display: flex;
    align-items: center;
    justify-content: center;
    background: #f7f8fa;
    border-right: 1px solid #d4d6da;
    border-bottom: 1px solid #d4d6da;
    font-size: 14px;
    color: #333;
}

.rh.short {
    z-index: 1;
}

.rh.sel {
    background: #e8ecf8;
    border-right: 1px solid #2f5ce8;
}

.c {
    display: flex;
    align-items: flex-end;
    padding: 0 2px;
    border-right: 1px solid #dcdee2;
    border-bottom: 1px solid #d4d6da;
    overflow: hidden;
    background: #fff;
    min-width: 0;
}

.c.num {
    justify-content: flex-end;
}

.span-all {
    grid-column: 2 / -1;
}

.span-4 {
    grid-column: 2 / 6;
}

.c.selected {
    z-index: 2;
    width: 288px;
    margin-top: -1px;
    margin-left: -1px;
    border: 1px solid #3a64ee;
    overflow: visible;
}

.c.to-end {
    justify-content: flex-end;
}

.h-scroll {
    height: 9px;
    flex-shrink: 0;
    padding: 1px 0 0 46px;
    background: #fff;
}

.h-thumb {
    display: block;
    width: 202px;
    height: 6px;
    border-radius: 3px;
    background: #b8bac0;
}

.sheet-foot {
    flex: 1;
    display: flex;
    align-items: center;
    padding-bottom: 3px;
    border-top: 1px solid #dfe1e5;
    background: #fff;
    color: #666;
}

.sf-plus {
    margin-left: 23px;
    stroke-width: 1.5;
}

.sf-list {
    margin-left: 19px;
    color: #444;
    stroke-width: 1.6;
}

.sheet-tab {
    width: 36px;
    height: 25px;
    margin-left: 15px;
    display: flex;
    align-items: center;
    justify-content: center;
    border-radius: 4px;
    box-shadow: 0 1px 4px rgba(0, 0, 0, 0.12);
    color: #2f5ce8;
    font-size: 11px;
    font-weight: 700;
}

.sf-grid {
    width: 20px;
    height: 22px;
    margin-left: 436px;
    display: flex;
    align-items: center;
    justify-content: center;
    border-radius: 3px;
    background: #e3e5ee;
    color: #3a64ee;
}

.sf-zoom {
    margin-left: 11px;
    color: #aaa;
    stroke-width: 1.5;
}

.sf-slider {
    position: relative;
    width: 116px;
    height: 1px;
    margin-left: 7px;
    background: #888;
    margin-right: -4px;
}

.sf-knob {
    position: absolute;
    left: 52px;
    top: -5px;
    width: 11px;
    height: 11px;
    border-radius: 50%;
    background: #fff;
    box-shadow: 0 0 3px rgba(0, 0, 0, 0.25);
}
```
